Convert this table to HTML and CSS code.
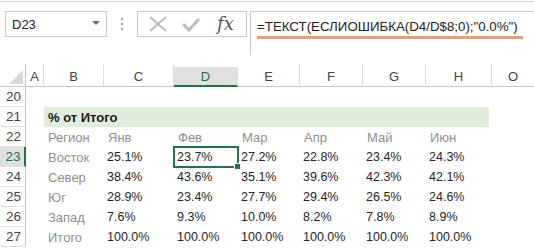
FILE: index.html
```html
<!DOCTYPE html>
<html lang="ru">
<head>
<meta charset="utf-8">
<link rel="stylesheet" href="styles.css">
</head>
<body>
<div class="app">
  <div class="topline"></div>
  <div class="bar">
    <div class="namebox"><span class="nb-text">D23</span><span class="nb-arrow"></span></div>
    <div class="dots"><span></span><span></span><span></span></div>
    <div class="buttons">
      <svg class="ic-x" width="20" height="16" viewBox="0 0 20 16"><path d="M2 1 L18 15 M18 1 L2 15" stroke="#b9b9b9" stroke-width="2" fill="none"/></svg>
      <svg class="ic-check" width="20" height="16" viewBox="0 0 20 16"><path d="M2 8 L8 14 L18 3" stroke="#bdbdbd" stroke-width="3" fill="none"/></svg>
      <span class="fx">fx</span>
    </div>
    <div class="formula"><span class="ftext">=ТЕКСТ(ЕСЛИОШИБКА(D4/D$8;0);"0.0%")</span></div>
  </div>

  <div class="sheet">
    <div class="ch corner"><span class="tri"></span></div>
    <div class="ch">A</div><div class="ch">B</div><div class="ch">C</div><div class="ch ch-sel">D</div><div class="ch">E</div><div class="ch">F</div><div class="ch">G</div><div class="ch">H</div><div class="ch last">O</div>

    <div class="rh">20</div><div class="c"></div><div class="c"></div><div class="c"></div><div class="c"></div><div class="c"></div><div class="c"></div><div class="c"></div><div class="c"></div><div class="c"></div>

    <div class="rh">21</div><div class="c"></div><div class="band">% от Итого</div><div class="c"></div>

    <div class="rh">22</div><div class="c"></div><div class="c lbl">Регион</div><div class="c lbl">Янв</div><div class="c lbl">Фев</div><div class="c lbl">Мар</div><div class="c lbl">Апр</div><div class="c lbl">Май</div><div class="c lbl">Июн</div><div class="c"></div>

    <div class="rh rh-sel">23</div><div class="c"></div><div class="c lbl">Восток</div><div class="c">25.1%</div><div class="c sel">23.7%</div><div class="c">27.2%</div><div class="c">22.8%</div><div class="c">23.4%</div><div class="c">24.3%</div><div class="c"></div>

    <div class="rh">24</div><div class="c"></div><div class="c lbl">Север</div><div class="c">38.4%</div><div class="c">43.6%</div><div class="c">35.1%</div><div class="c">39.6%</div><div class="c">42.3%</div><div class="c">42.1%</div><div class="c"></div>

    <div class="rh">25</div><div class="c"></div><div class="c lbl">Юг</div><div class="c">28.9%</div><div class="c">23.4%</div><div class="c">27.7%</div><div class="c">29.4%</div><div class="c">26.5%</div><div class="c">24.6%</div><div class="c"></div>

    <div class="rh">26</div><div class="c"></div><div class="c lbl">Запад</div><div class="c">7.6%</div><div class="c">9.3%</div><div class="c">10.0%</div><div class="c">8.2%</div><div class="c">7.8%</div><div class="c">8.9%</div><div class="c"></div>

    <div class="rh">27</div><div class="c"></div><div class="c lbl">Итого</div><div class="c">100.0%</div><div class="c">100.0%</div><div class="c">100.0%</div><div class="c">100.0%</div><div class="c">100.0%</div><div class="c">100.0%</div><div class="c"></div>
  </div>
</div>
</body>
</html>
```

FILE: styles.css
```css
html, body {
  margin: 0;
  padding: 0;
  background: #ffffff;
}
body {
  width: 534px;
  height: 250px;
  overflow: hidden;
  font-family: "Liberation Sans", Arial, sans-serif;
}
.app {
  width: 534px;
}
.topline {
  margin-top: 1px;
  height: 1px;
  background: #d4d4d4;
}
.bar {
  display: flex;
  align-items: flex-start;
  padding: 9px 0 0 5px;
  height: 53px;
  box-sizing: border-box;
  overflow: hidden;
}
.namebox {
  width: 102px;
  height: 26px;
  box-sizing: border-box;
  border: 1px solid #c8c8c8;
  display: flex;
  align-items: center;
  justify-content: space-between;
  padding: 0 6px 0 6px;
  flex: none;
}
.nb-text {
  font-size: 13px;
  color: #222;
}
.nb-arrow {
  width: 0;
  height: 0;
  border-left: 4px solid transparent;
  border-right: 4px solid transparent;
  border-top: 4px solid #6a6a6a;
  margin-top: -2px;
}
.dots {
  width: 30px;
  height: 26px;
  display: flex;
  flex-direction: column;
  align-items: center;
  justify-content: center;
  gap: 3px;
  flex: none;
}
.dots span {
  width: 2px;
  height: 2px;
  background: #a8a8a8;
}
.buttons {
  width: 110px;
  height: 26px;
  box-sizing: border-box;
  border: 1px solid #c8c8c8;
  display: flex;
  align-items: center;
  padding: 0 0 0 10px;
  gap: 13px;
  flex: none;
}
.fx {
  font-family: "DejaVu Serif", "Liberation Serif", serif;
  font-style: italic;
  font-size: 18px;
  color: #555;
  margin-left: 3px;
  margin-top: -2px;
}
.formula {
  margin-left: 3px;
  width: 320px;
  height: 46px;
  box-sizing: border-box;
  border: 1px solid #c8c8c8;
  padding: 5px 0 0 6px;
  flex: none;
}
.ftext {
  display: inline-block;
  font-size: 13.3px;
  color: #222;
  padding-bottom: 2px;
  border-bottom: 3px solid #dca283;
  padding-right: 5px;
}
.sheet {
  margin-top: 9px;
  display: grid;
  grid-template-columns: 26px 18px 60px 70px 64px 62px 63px 63px 66px 42px;
  grid-template-rows: 23px repeat(8, 20px);
  font-size: 12.5px;
  color: #262626;
}
.ch {
  border-bottom: 1px solid #c6c6c6;
  border-right: 1px solid #dcdcdc;
  color: #444;
  display: flex;
  align-items: center;
  justify-content: center;
  padding-top: 2px;
  box-sizing: border-box;
  font-size: 13px;
}
.ch.last {
  border-right: none;
}
.corner {
  border-right: 1px solid #c6c6c6;
  position: relative;
}
.tri {
  position: absolute;
  right: 2px;
  bottom: 2px;
  width: 0;
  height: 0;
  border-left: 14px solid transparent;
  border-bottom: 14px solid #d7d7d7;
}
.ch-sel {
  margin-top: 3px;
  background: #e0e0e0;
  color: #217346;
  border-bottom: 2px solid #217346;
  padding-top: 0;
}
.rh {
  border-right: 1px solid #c6c6c6;
  border-bottom: 1px solid #e0e0e0;
  box-sizing: border-box;
  display: flex;
  align-items: center;
  justify-content: center;
  color: #444;
  font-size: 13.5px;
  padding-left: 2px;
}
.rh-sel {
  background: #e0e0e0;
  color: #217346;
  border-right: 2px solid #217346;
}
.c {
  display: flex;
  align-items: center;
  padding-left: 3px;
  white-space: nowrap;
  overflow: visible;
}
.lbl {
  color: #8e8e8e;
  padding-left: 4px;
  font-size: 13px;
}
.band {
  grid-column: 3 / 10;
  background: #e0eed9;
  font-weight: bold;
  color: #1a1a1a;
  display: flex;
  align-items: center;
  padding-left: 4px;
  margin-right: 3px;
  font-size: 13px;
}
.sel {
  position: relative;
  outline: 2px solid #217346;
  outline-offset: -1px;
}
.sel::after {
  content: "";
  position: absolute;
  right: -3px;
  bottom: -3px;
  width: 5px;
  height: 5px;
  background: #217346;
  border: 1px solid #fff;
}
```
